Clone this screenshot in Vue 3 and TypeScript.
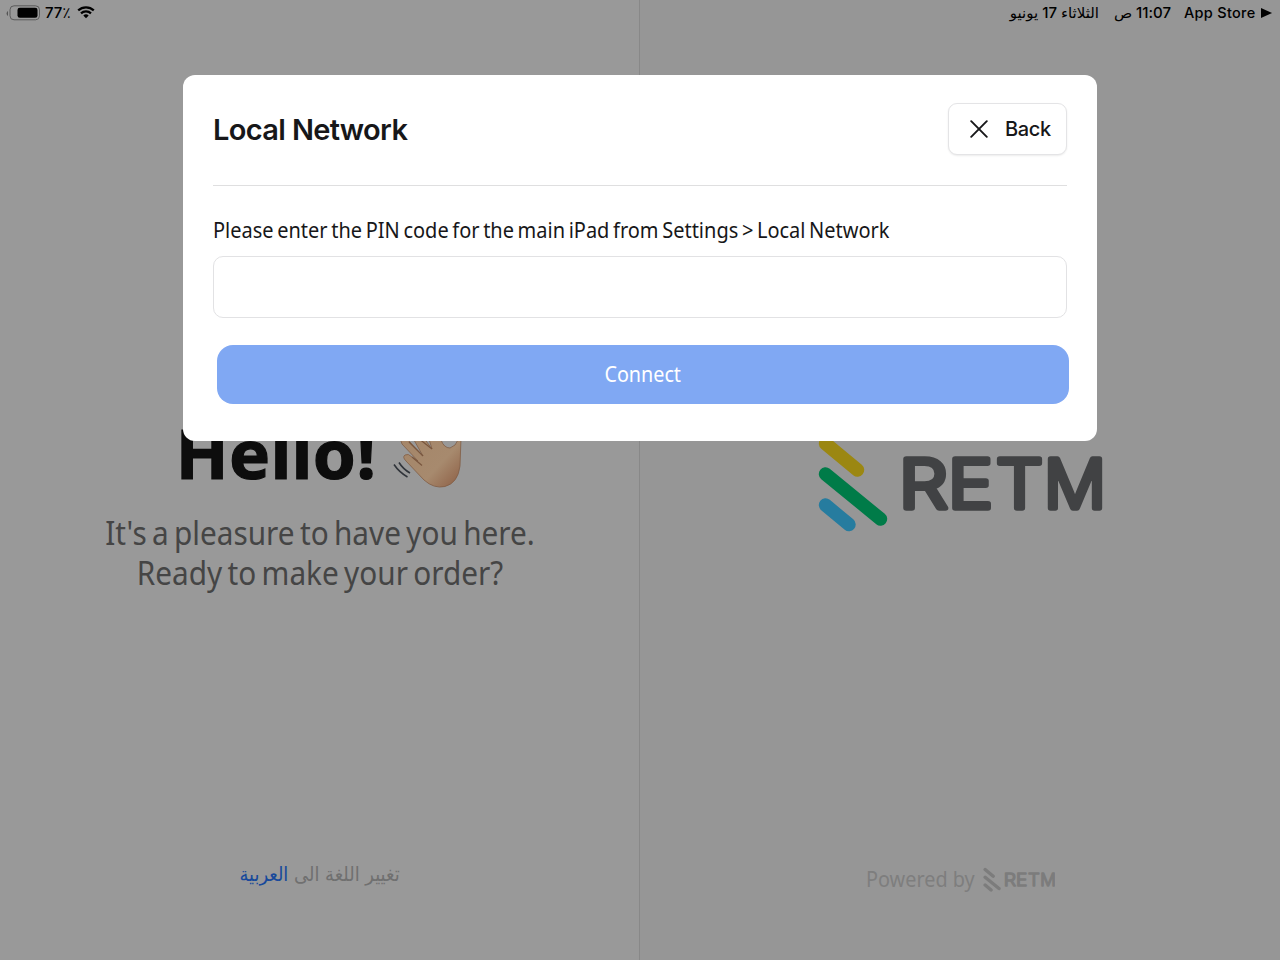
<script setup lang="ts">
import { ref } from 'vue'

const pin = ref('')
const wordmark = [
  { letter: 'R', x: 82, width: 49 },
  { letter: 'E', x: 131, width: 45 },
  { letter: 'T', x: 179, width: 47 },
  { letter: 'M', x: 227, width: 62 },
]
</script>

<template>
  <div class="screen">
    <header class="status">
      <div class="status-left">
        <svg width="34" height="16" viewBox="0 0 34 16">
          <path d="M2 6v5Q.6 10.200 .6 8.500T2 6Z" fill="#555" />
          <rect x="4" y=".8" width="29.500" height="14" rx="4" fill="none" stroke="#5b5b5b" />
          <rect x="11.500" y="2.800" width="20" height="10" rx="2.300" fill="#000" />
        </svg>
        <span class="percent">77٪</span>
        <svg class="wifi" width="18" height="14" viewBox="0 0 18 14" fill="none" stroke="#000" stroke-width="2.200">
          <path d="M1.200 5.400a11.300 11.300 0 0 1 15.600 0M4 8.400a7.200 7.200 0 0 1 10 0" />
          <path d="M9 13.300 6.300 10.500a4 4 0 0 1 5.400 0Z" fill="#000" stroke="none" />
        </svg>
      </div>
      <div class="status-right">
        <span class="date" dir="rtl">الثلاثاء 17 يونيو</span>
        <span class="time" dir="rtl">11:07 ص</span>
        <span class="store">App Store</span>
        <svg width="11" height="10" viewBox="0 0 11 10"><path d="M0 0 11 5 0 10Z" /></svg>
      </div>
    </header>

    <main class="panels">
      <section class="panel welcome">
        <div class="greeting">
          <h1>Hello!</h1>
          <svg class="hand" width="70" height="72" viewBox="393 417 70 72">
            <defs>
              <linearGradient id="skin" x1="0" y1="0" x2="1" y2="1">
                <stop offset="0" stop-color="#a48568" />
                <stop offset=".65" stop-color="#a78a6e" />
                <stop offset="1" stop-color="#8c5d43" />
              </linearGradient>
            </defs>
            <path
              d="M424 480 406 461Q402 457 405 455T412 457L418 461 402 444Q399 438 406 438L423 456 410 433Q411 426 418 430L432 449 425 426Q428 419 434 426L441 440Q444 448 450 448 456 446 458 440L458 432Q461 428 461 438L460 466Q458 483 445 486.500 434 489 424 480Z"
              fill="url(#skin)"
              stroke="#805d45"
              stroke-width=".8"
            />
            <path d="M412 457 422 465.500M409 442 423 456M418 438 432 449" fill="none" stroke="#79563e" stroke-width="1.200" />
            <path d="M394 464.500Q399 472 407.500 477M399 462.500Q403 469 410 473" fill="none" stroke="#30343a" stroke-width="1.600" />
          </svg>
        </div>
        <p class="subtitle">
          <span class="line-one">It's a pleasure to have you here.</span>
          <span class="line-two">Ready to make your order?</span>
        </p>
        <p class="language" dir="rtl">تغيير اللغة الى <a>العربية</a></p>
      </section>
      <section class="panel brand">
        <svg class="logo" viewBox="0 0 286 98">
          <g class="bars">
            <path class="bar-a" d="M8.500 9.500 40.500 36" />
            <path class="bar-b" d="M8.500 40 63.500 85" />
            <path class="bar-c" d="M8.500 71 32 90.500" />
          </g>
          <text
            v-for="item in wordmark"
            :key="item.letter"
            class="mark"
            :x="item.x"
            y="74"
            :textLength="item.width"
            lengthAdjust="spacingAndGlyphs"
          >{{ item.letter }}</text>
        </svg>
        <div class="powered">
          <span>Powered by</span>
          <svg class="logo small" viewBox="0 0 286 98">
            <g class="bars">
              <path class="bar-a" d="M8.500 9.500 40.500 36" />
              <path class="bar-b" d="M8.500 40 63.500 85" />
              <path class="bar-c" d="M8.500 71 32 90.500" />
            </g>
            <text
              v-for="item in wordmark"
              :key="item.letter"
              class="mark"
              :x="item.x"
              y="74"
              :textLength="item.width"
              lengthAdjust="spacingAndGlyphs"
            >{{ item.letter }}</text>
          </svg>
        </div>
      </section>
    </main>

    <div class="modal" role="dialog">
      <div class="modal-head">
        <h2>Local Network</h2>
        <button class="back" type="button">
          <svg width="18" height="18" viewBox="0 0 18 18" fill="none" stroke="#171719" stroke-width="1.900" stroke-linecap="round">
            <path d="M1.200 1.200 16.800 16.800M16.800 1.200 1.200 16.800" />
          </svg>
          <span>Back</span>
        </button>
      </div>
      <label for="pin">Please enter the PIN code for the main iPad from Settings &gt; Local Network</label>
      <input id="pin" v-model="pin" type="text" />
      <button class="connect" type="button"><span>Connect</span></button>
    </div>
  </div>
</template>

<style scoped>
* {
  box-sizing: border-box;
  margin: 0;
}
.screen {
  position: relative;
  width: 1280px;
  height: 960px;
  overflow: hidden;
  background: #999;
  color: #111;
  font-family: "Noto Sans", "DejaVu Sans", sans-serif;
  display: flex;
  flex-direction: column;
}
.status {
  position: absolute;
  inset: 0 0 auto;
  z-index: 1;
  height: 25px;
  padding: 0 8px 0 6px;
  display: flex;
  justify-content: space-between;
  font: 500 14px/25px Inter, "DejaVu Sans", sans-serif;
  color: #000;
}
.status-left,
.status-right {
  display: flex;
  align-items: center;
  white-space: nowrap;
}
.percent {
  width: 28px;
  margin: 0 4px 0 5px;
  font-size: 15px;
}
.wifi {
  margin-bottom: 2px;
}
.date {
  width: 91px;
  margin-right: 13px;
  font-size: 15px;
}
.time {
  width: 59px;
  margin-right: 13px;
  font-size: 15px;
  letter-spacing: 0.2px;
}
.store {
  width: 72px;
  margin-right: 5px;
  font-size: 14.5px;
  letter-spacing: 0.3px;
}
.panels {
  flex: 1;
  display: grid;
  grid-template-columns: 640px 640px;
}
.panel {
  display: flex;
  flex-direction: column;
  align-items: center;
}
.welcome {
  padding-top: 405px;
  border-right: 1px solid #888;
}
.brand {
  padding-top: 434px;
  background: #969696;
}
.greeting {
  display: flex;
  align-items: center;
  height: 96px;
  gap: 17px;
}
h1 {
  height: 98px;
  font-size: 69px;
  line-height: 96px;
  font-weight: 700;
  color: #0d0d0d;
  -webkit-text-stroke: 1.2px #0d0d0d;
  letter-spacing: 0.5px;
}
.subtitle {
  margin-top: 12px;
  display: flex;
  flex-direction: column;
  align-items: center;
  font-size: 32px;
  line-height: 40px;
  word-spacing: -2.6px;
  color: #454545;
  white-space: nowrap;
  transform: scaleX(0.93);
}
.language {
  margin-top: 265px;
  font: 20px/32px "DejaVu Sans", sans-serif;
  color: #707070;
  transform: scaleX(0.895);
}
.language a {
  color: #17499b;
}
.logo {
  width: 286px;
  height: 98px;
  --a: #9b8712;
  --b: #007b48;
  --c: #267c9f;
  --ink: #414244;
}
.logo.small {
  width: 72px;
  height: 25px;
  --a: #7c7c7c;
  --b: #7c7c7c;
  --c: #7c7c7c;
  --ink: #7c7c7c;
}
.bars {
  stroke-width: 13.4px;
  stroke-linecap: round;
}
.bar-a {
  stroke: var(--a);
}
.bar-b {
  stroke: var(--b);
}
.bar-c {
  stroke: var(--c);
}
.mark {
  font: 300 67px Inter, sans-serif;
  fill: var(--ink);
  stroke: var(--ink);
  stroke-width: 5.5px;
  stroke-linejoin: round;
}
.powered {
  margin-top: 331px;
  display: flex;
  align-items: center;
  gap: 8px;
  font-size: 21px;
  line-height: 32px;
  color: #7e7e7e;
}
.powered span {
  width: 109px;
  white-space: nowrap;
  transform: scaleX(0.945);
  transform-origin: left;
}
.modal {
  position: absolute;
  z-index: 2;
  top: 75px;
  left: 183px;
  width: 914px;
  height: 366px;
  padding: 28px 30px 0;
  border-radius: 12px;
  background: #fff;
}
.modal-head {
  height: 83px;
  border-bottom: 1px solid #dfdfe0;
  display: flex;
  align-items: flex-start;
  justify-content: space-between;
}
h2 {
  font: 600 29px/54px Inter, sans-serif;
  letter-spacing: -0.65px;
  color: #171719;
}
.back {
  width: 119px;
  height: 52px;
  padding: 0 15px 0 21px;
  border: 1px solid #e4e4e6;
  border-radius: 9px;
  background: #fff;
  box-shadow: 0 1px 2px rgba(0, 0, 0, 0.08);
  display: flex;
  align-items: center;
  justify-content: space-between;
  font: 500 20px/50px Inter, sans-serif;
  letter-spacing: -0.3px;
  color: #171719;
}
label {
  display: block;
  width: max-content;
  margin-top: 28px;
  height: 32px;
  font-size: 21.5px;
  line-height: 32px;
  word-spacing: -1.7px;
  white-space: nowrap;
  color: #171719;
  transform: scaleX(0.93);
  transform-origin: left;
}
input {
  display: block;
  width: 854px;
  height: 62px;
  margin-top: 10px;
  padding: 0 16px;
  border: 1px solid #e2e2e4;
  border-radius: 10px;
  font: 21px "Noto Sans", sans-serif;
  outline: none;
}
.connect {
  display: block;
  width: 852px;
  height: 59px;
  margin: 27px 0 0 3.500px;
  padding: 0;
  border: 0;
  border-radius: 16px;
  background: #80a8f3;
  font: 21px/57px "Noto Sans", sans-serif;
  color: #fff;
}
.connect span {
  display: inline-block;
  transform: scaleX(0.94);
}
</style>
